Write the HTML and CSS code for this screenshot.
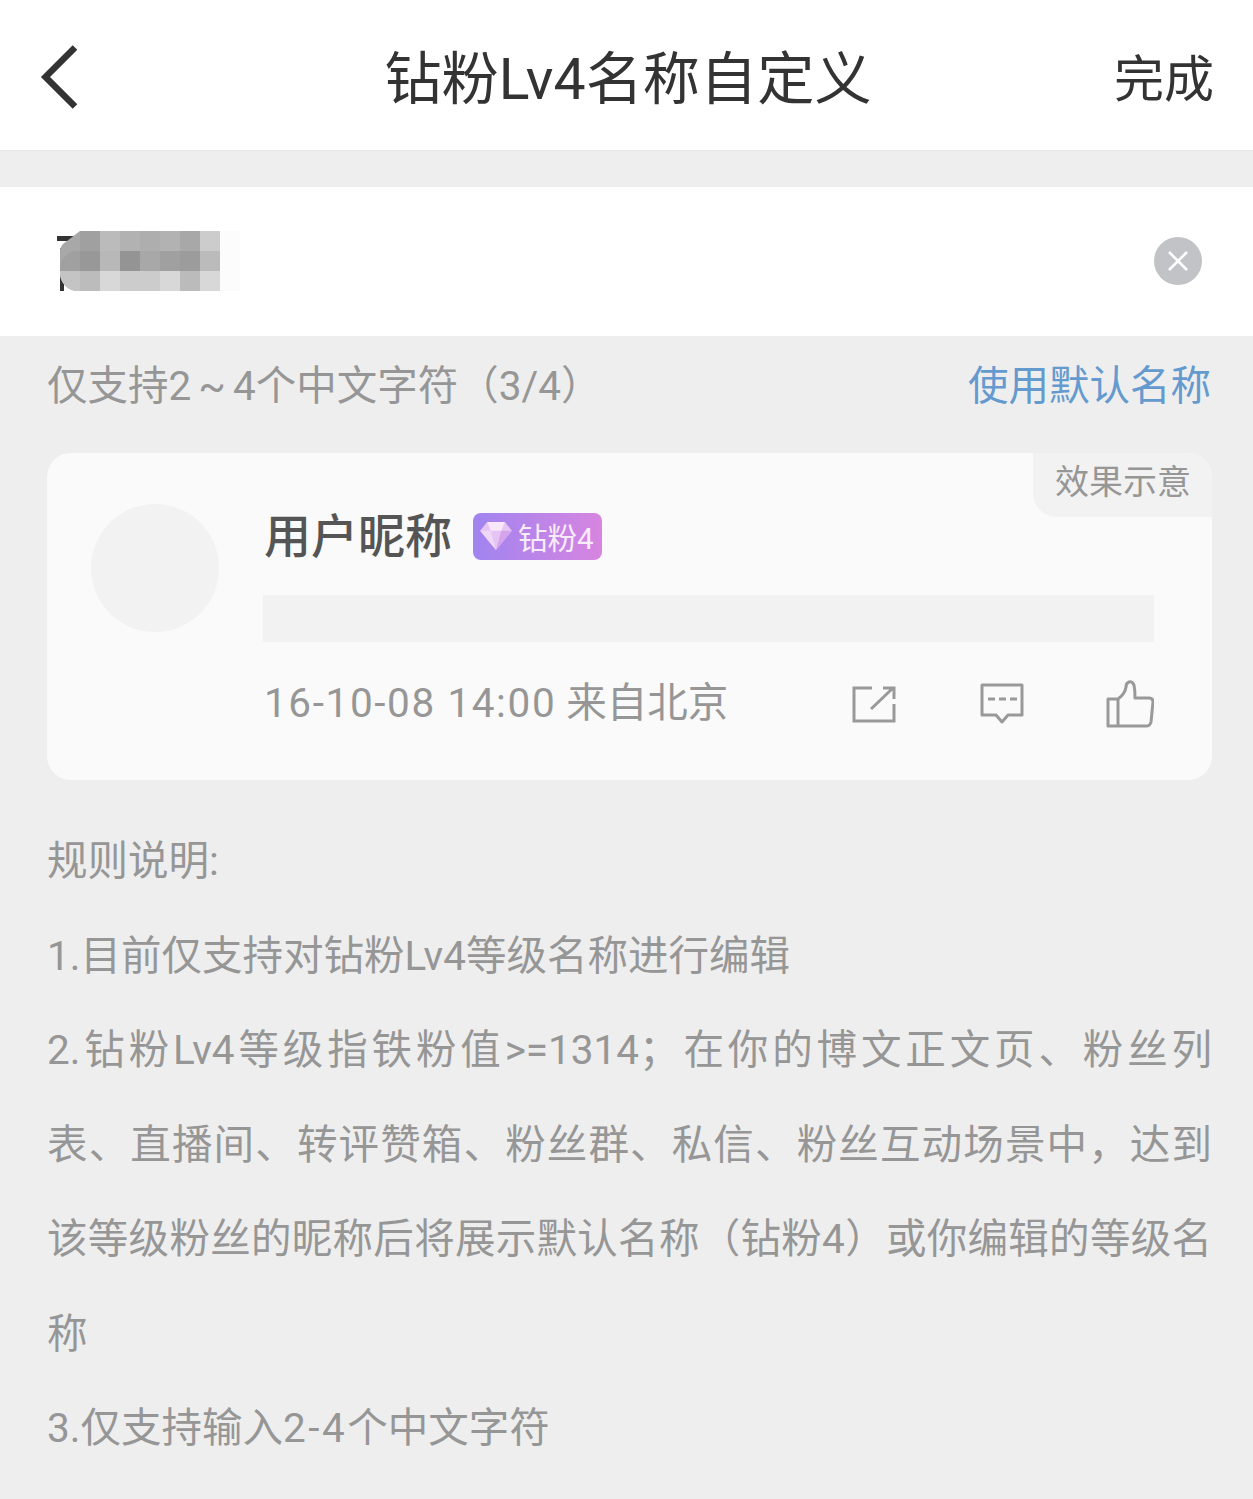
FILE: index.html
```html
<!DOCTYPE html>
<html lang="zh-CN">
<head>
    <meta charset="UTF-8">
    <meta name="viewport" content="width=device-width, initial-scale=1.0">
    <title>钻粉Lv4名称自定义</title>
    <link rel="stylesheet" href="styles.css">
</head>
<body>

    <!-- Top bar -->
    <header class="top-bar">
        <svg class="back-icon" width="40" height="66" viewBox="0 0 40 66">
            <path d="M35 3.5 L5.5 33 L35 62.5" fill="none" stroke="#333" stroke-width="6.5"/>
        </svg>
        <h1 class="page-title">钻粉Lv4名称自定义</h1>
        <span class="done-btn">完成</span>
    </header>

    <!-- Name input, the typed name is pixelated -->
    <section class="name-input">
        <svg class="mosaic" width="220" height="70" viewBox="0 0 220 70">
            <rect x="-3" y="10" width="30" height="5" fill="#333"/>
            <rect x="0" y="22" width="4" height="43" fill="#333"/>
            <path d="M20 5 H40 V65 H18 A18 18 0 0 1 0 47 V23 A18 18 0 0 1 3 18 Z" fill="#a8a8a8"/>
            <rect x="40" y="5" width="20" height="20" fill="#bbb"/>
            <rect x="60" y="5" width="20" height="20" fill="#b2b2b2"/>
            <rect x="80" y="5" width="20" height="20" fill="#aeaeae"/>
            <rect x="100" y="5" width="20" height="20" fill="#b2b2b2"/>
            <rect x="120" y="5" width="20" height="20" fill="#a8a8a8"/>
            <rect x="140" y="5" width="20" height="20" fill="#ccc"/>
            <rect x="20" y="5" width="20" height="20" fill="#a0a0a0"/>
            <path d="M0 43 A18 18 0 0 1 18 25 H20 V45 H0 Z" fill="#a0a0a0"/>
            <rect x="20" y="25" width="20" height="20" fill="#989898"/>
            <rect x="40" y="25" width="20" height="20" fill="#b8b8b8"/>
            <rect x="60" y="25" width="20" height="20" fill="#949494"/>
            <rect x="80" y="25" width="20" height="20" fill="#a8a8a8"/>
            <rect x="100" y="25" width="20" height="20" fill="#a0a0a0"/>
            <rect x="120" y="25" width="20" height="20" fill="#9c9c9c"/>
            <rect x="140" y="25" width="20" height="20" fill="#bbb"/>
            <path d="M0 45 H20 V65 H18 A18 18 0 0 1 0 47 Z" fill="#c4c4c4"/>
            <rect x="20" y="45" width="20" height="20" fill="#bcbcbc"/>
            <rect x="40" y="45" width="20" height="20" fill="#d8d8d8"/>
            <rect x="60" y="45" width="20" height="20" fill="#ccc"/>
            <rect x="80" y="45" width="20" height="20" fill="#ccc"/>
            <rect x="100" y="45" width="20" height="20" fill="#d8d8d8"/>
            <rect x="120" y="45" width="20" height="20" fill="#bbb"/>
            <rect x="140" y="45" width="20" height="20" fill="#d8d8d8"/>
            <rect x="160" y="5" width="20" height="60" fill="#fcfcfc"/>
        </svg>
        <span class="clear-btn">
            <svg width="22" height="22" viewBox="0 0 22 22">
                <path d="M2 2 L20 20 M20 2 L2 20" stroke="#fff" stroke-width="2.6"/>
            </svg>
        </span>
    </section>

    <div class="hint-row">
        <span class="hint-text">仅支持2 ~ 4个中文字符（3/4）</span>
        <span class="default-link">使用默认名称</span>
    </div>

    <!-- Preview card -->
    <section class="preview-card">
        <div class="preview-tag">效果示意</div>
        <div class="avatar"></div>
        <div class="post">
            <div class="post-head">
                <span class="nickname">用户昵称</span>
                <span class="fan-badge">
                    <svg width="34" height="30" viewBox="0 0 38 34">
                        <path d="M9 1 H29 L37 11 L19 33 L1 11 Z" fill="#e6c4f4"/>
                        <path d="M9 1 H29 L25 11 H13 Z" fill="#f8e6fb"/>
                        <path d="M1 11 H13 L19 33 Z" fill="#f0d6f7"/>
                        <path d="M37 11 H25 L19 33 Z" fill="#d6a4ec"/>
                    </svg>
                    <span>钻粉4</span>
                </span>
            </div>
            <div class="post-body"></div>
            <div class="post-foot">
                <span class="post-meta"><span class="post-date">16-10-08 14:00</span> 来自北京</span>
                <div class="post-actions">
                    <svg width="46" height="38" viewBox="1 0 46 38" fill="none" stroke="#999" stroke-width="3">
                        <path d="M21 3 H3 V36 H43 V19"/>
                        <path d="M20 24 L42 3 M32 3 H43 V14"/>
                    </svg>
                    <svg width="44" height="42" viewBox="0 0 44 42" fill="none" stroke="#999" stroke-width="3">
                        <path d="M2 2 H42 V32 H28 L22 39 L16 32 H2 Z" stroke-linejoin="round"/>
                        <path d="M8 16 H15 M19 16 H26 M30 16 H37"/>
                    </svg>
                    <svg width="48" height="48" viewBox="0 0 48 48" fill="none" stroke="#999" stroke-width="3">
                        <path d="M12 19 H2 V46 H41 Q44 46 45 42 L47 22 Q47 18 43 18 H29 Q29 10 28 5 Q26 1 23 2 Q20 3 20 7 Q19 14 12 19 V46" stroke-linejoin="round"/>
                    </svg>
                </div>
            </div>
        </div>
    </section>

    <!-- Rules -->
    <section class="rules">
        <p>规则说明:</p>
        <p>1.目前仅支持对钻粉Lv4等级名称进行编辑</p>
        <p>
            <span class="rule-line">2.钻粉Lv4等级指铁粉值&gt;=1314；在你的博文正文页、粉丝列</span>
            <span class="rule-line">表、直播间、转评赞箱、粉丝群、私信、粉丝互动场景中，达到</span>
            <span class="rule-line">该等级粉丝的昵称后将展示默认名称（钻粉4）或你编辑的等级名</span>
            称
        </p>
        <p>3.仅支持输入<span class="wide-num">2-4</span>个中文字符</p>
    </section>

</body>
</html>
```

FILE: styles.css
```css
html, body {
    height: 1499px;
    overflow: hidden;
}

body {
    margin: 0;
    background: #eee;
    font-family: "Roboto", "Noto Sans CJK SC", sans-serif;
    color: #969696;
}

.top-bar {
    display: flex;
    align-items: center;
    justify-content: space-between;
    height: 150px;
    padding: 0 39px 0 40px;
    background: #fff;
    border-bottom: 1px solid #e6e6e6;
}

.back-icon {
    margin-top: 3px;
}

.page-title {
    margin: 0 0 2px 62px;
    font-size: 57.2px;
    font-weight: 400;
    color: #333;
}

.done-btn {
    font-size: 50px;
    color: #333;
}

.name-input {
    display: flex;
    align-items: center;
    justify-content: space-between;
    height: 147px;
    margin-top: 36px;
    padding: 0 51px 2px 60px;
    background: #fff;
}

.mosaic {
    overflow: visible;
}

.clear-btn {
    display: flex;
    align-items: center;
    justify-content: center;
    width: 48px;
    height: 48px;
    border-radius: 50%;
    background: #c2c3c6;
}

.hint-row {
    display: flex;
    align-items: center;
    justify-content: space-between;
    height: 92px;
    padding: 0 42px 0 47px;
    font-size: 40.5px;
}

.hint-text {
    word-spacing: -3px;
}

.default-link {
    color: #659ace;
}

.preview-card {
    position: relative;
    display: flex;
    height: 327px;
    box-sizing: border-box;
    margin: 25px 41px 0 47px;
    padding: 51px 58px 0 44px;
    background: #fafafa;
    border-radius: 24px;
}

.preview-tag {
    position: absolute;
    top: 0;
    right: 0;
    display: flex;
    align-items: center;
    justify-content: center;
    width: 178px;
    height: 52px;
    padding: 0 0 12px 1px;
    background: #f2f2f2;
    border-radius: 0 24px 0 24px;
    font-size: 34px;
}

.avatar {
    flex: none;
    width: 128px;
    height: 128px;
    margin-right: 44px;
    border-radius: 50%;
    background: #f2f2f2;
}

.post {
    flex: 1;
}

.post-head {
    display: flex;
    align-items: center;
    gap: 21px;
    height: 64px;
    margin-top: -4px;
    padding-left: 1px;
}

.nickname {
    font-size: 47px;
    font-weight: 500;
    color: #555;
}

.fan-badge {
    display: flex;
    align-items: center;
    gap: 5px;
    width: 129px;
    height: 47px;
    box-sizing: border-box;
    margin-top: 8px;
    padding-left: 6px;
    border-radius: 8px;
    background: linear-gradient(to right, #a084f0, #d785e0);
    font-size: 29.5px;
    color: #f8ecfa;
    white-space: nowrap;
}

.post-body {
    height: 47px;
    margin-top: 31px;
    background: #f2f2f2;
}

.post-foot {
    display: flex;
    align-items: center;
    justify-content: space-between;
    height: 48px;
    margin-top: 38px;
    padding-left: 1px;
}

.post-meta {
    margin-bottom: 10px;
    font-size: 40.5px;
}

.post-date {
    letter-spacing: 1.6px;
}

.post-actions {
    display: flex;
    align-items: center;
    gap: 82px;
}

.rules {
    margin: 34px 41px 0 47px;
    font-size: 40.5px;
    line-height: 94.5px;
}

.rules p {
    margin: 0;
}

.rule-line {
    display: block;
    text-align: justify;
    text-align-last: justify;
}

.wide-num {
    letter-spacing: 2.5px;
}
```
